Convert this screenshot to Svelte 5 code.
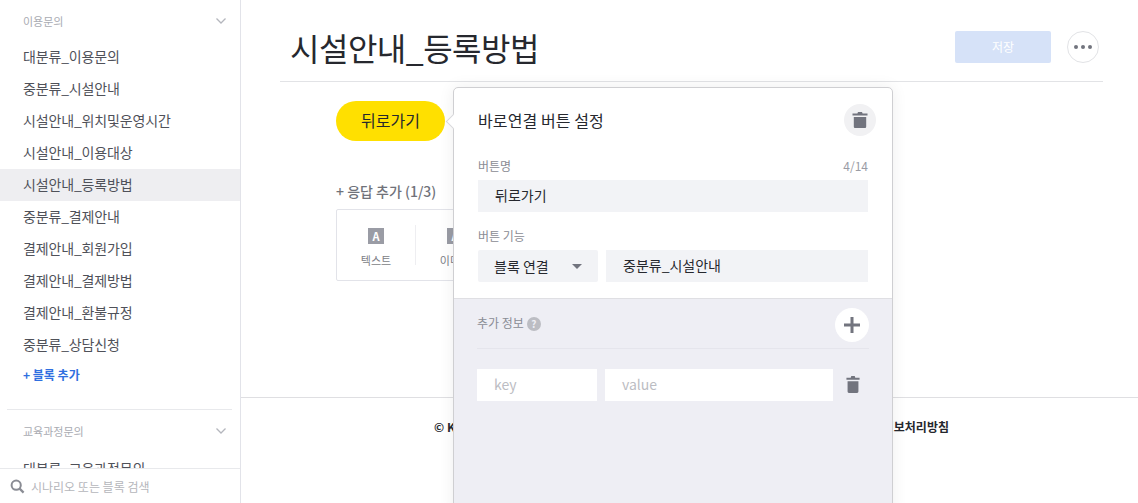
<script>
  const groups = [
    {
      title: "이용문의",
      items: [
        "대분류_이용문의",
        "중분류_시설안내",
        "시설안내_위치및운영시간",
        "시설안내_이용대상",
        "시설안내_등록방법",
        "중분류_결제안내",
        "결제안내_회원가입",
        "결제안내_결제방법",
        "결제안내_환불규정",
        "중분류_상담신청"
      ]
    },
    { title: "교육과정문의", items: ["대분류_교육과정문의"] }
  ];
  const current = "시설안내_등록방법";
  const trash = "M6 0h4l.6 1.6h4.9v1.9H.5V1.6h4.9zM1.8 5h12.4v9.4c0 .9-.6 1.6-1.5 1.6H3.3c-.9 0-1.5-.7-1.5-1.6z";
</script>

<div class="page">
  <aside class="sidebar">
    <div class="tree">
      {#each groups as group, i}
        <section class="group" class:first={i === 0}>
          <div class="group-head">
            <span>{group.title}</span>
            <svg width="10" height="6" viewBox="0 0 10 6"><path d="M.5.5L5 5 9.5.5" fill="none" stroke="#b4b6bd" stroke-width="1.3" /></svg>
          </div>
          {#each group.items as item}
            <div class="row" class:active={item === current}>{item}</div>
          {/each}
          {#if i === 0}
            <div class="add-block">+ 블록 추가</div>
          {/if}
        </section>
      {/each}
    </div>
    <div class="search">
      <svg width="15" height="15" viewBox="0 0 15 15"><circle cx="6.2" cy="6.2" r="4.6" fill="none" stroke="#8a8c94" stroke-width="2" /><path d="M9.6 9.6l4 4" stroke="#8a8c94" stroke-width="2.2" /></svg>
      <span>시나리오 또는 블록 검색</span>
    </div>
  </aside>

  <main class="main">
    <div class="content">
      <header class="head">
        <h1>시설안내_등록방법</h1>
        <div class="save">저장</div>
        <div class="more"><i></i><i></i><i></i></div>
      </header>

      <div class="editor">
        <div class="bubble">뒤로가기</div>
        <div class="add-title">+ 응답 추가 (1/3)</div>
        <div class="types">
          <div class="type">
            <span class="type-icon">A</span>
            <span class="type-name">텍스트</span>
          </div>
          <div class="type">
            <span class="type-icon">A</span>
            <span class="type-name">이미지</span>
          </div>
        </div>

        <div class="panel">
          <span class="arrow"></span>
          <div class="panel-top">
            <div class="panel-head">
              <h2>바로연결 버튼 설정</h2>
              <div class="trash-btn">
                <svg width="16" height="16" viewBox="0 0 16 16"><path d={trash} fill="#72747e" /></svg>
              </div>
            </div>
            <div class="label first-label"><span>버튼명</span><span class="count">4/14</span></div>
            <div class="field">뒤로가기</div>
            <div class="label second-label"><span>버튼 기능</span></div>
            <div class="field-row">
              <div class="field select">블록 연결<span class="caret"></span></div>
              <div class="field grow">중분류_시설안내</div>
            </div>
          </div>
          <div class="panel-extra">
            <div class="extra-head">
              <span class="extra-title">추가 정보</span>
              <span class="help">?</span>
              <div class="plus">
                <svg width="16" height="16" viewBox="0 0 16 16"><path d="M8 0v16M0 8h16" stroke="#72747e" stroke-width="3" /></svg>
              </div>
            </div>
            <div class="extra-row">
              <div class="ph key">key</div>
              <div class="ph value">value</div>
              <svg width="14" height="17" viewBox="0 0 16 16" preserveAspectRatio="none"><path d={trash} fill="#72747e" /></svg>
            </div>
          </div>
        </div>
      </div>
    </div>

    <footer class="foot">
      <div class="foot-inner">
        <span>© Kakao Corp.</span>
        <span>개인정보처리방침</span>
      </div>
    </footer>
  </main>
</div>

<style>
  :global(body) {
    margin: 0;
    background: #fff;
  }

  .page {
    display: flex;
    height: 503px;
    overflow: hidden;
    font-family: "Noto Sans CJK KR", "Noto Sans", sans-serif;
    color: #3b3d45;
  }

  .sidebar {
    width: 240px;
    flex: none;
    display: flex;
    flex-direction: column;
    border-right: 1px solid #e2e3e9;
  }

  .tree {
    flex: 1;
    min-height: 0;
    overflow: hidden;
  }

  .group {
    margin-top: 1px;
  }

  .group.first {
    margin: 0 8px 0 7px;
    padding-bottom: 20px;
    border-bottom: 1px solid #e8e9ec;
  }

  .group-head {
    display: flex;
    align-items: center;
    justify-content: space-between;
    height: 42px;
    box-sizing: border-box;
    padding: 0 14px 2px 23px;
    font-size: 11px;
    color: #a9abb2;
  }

  .group.first .group-head {
    height: 41px;
    padding: 0 6px 0 16px;
  }

  .group.first .row {
    margin: 0 -8px 0 -7px;
  }

  .group.first .add-block {
    margin-left: -7px;
  }

  .row {
    height: 32px;
    line-height: 30px;
    padding-left: 23px;
    font-size: 14px;
    letter-spacing: -0.15px;
    color: #4f5159;
    white-space: nowrap;
  }

  .row.active {
    background: #eeeef1;
  }

  .add-block {
    height: 28px;
    line-height: 28px;
    padding-left: 23px;
    font-size: 12px;
    font-weight: 700;
    color: #2f6fe0;
  }

  .search {
    height: 34px;
    flex: none;
    display: flex;
    align-items: center;
    gap: 6px;
    padding-left: 10px;
    border-top: 1px solid #e8e9ec;
    font-size: 12px;
    color: #b5b6bb;
  }

  .main {
    flex: 1;
    min-width: 0;
    display: flex;
    flex-direction: column;
  }

  .content {
    height: 398px;
    flex: none;
    padding: 0 35px 0 39px;
    box-sizing: border-box;
    border-bottom: 1px solid #dfdfe2;
  }

  .head {
    height: 82px;
    box-sizing: border-box;
    display: flex;
    align-items: center;
    gap: 16px;
    padding: 13px 4px 0 10px;
    border-bottom: 1px solid #e2e3e6;
  }

  h1 {
    flex: 1;
    margin: 0;
    font-size: 32px;
    font-weight: 400;
    letter-spacing: -0.5px;
    color: #26282e;
  }

  .save {
    width: 96px;
    height: 32px;
    line-height: 32px;
    text-align: center;
    font-size: 12px;
    color: #fff;
    background: #d6e2f8;
    border-radius: 2px;
  }

  .more {
    width: 32px;
    height: 32px;
    box-sizing: border-box;
    display: flex;
    align-items: center;
    justify-content: center;
    gap: 3px;
    border: 1px solid #e2e3e6;
    border-radius: 50%;
  }

  .more i {
    width: 4px;
    height: 4px;
    border-radius: 50%;
    background: #72747e;
  }

  .editor {
    position: relative;
    padding: 19px 0 0 56px;
  }

  .bubble {
    width: 109px;
    height: 40px;
    line-height: 39px;
    text-align: center;
    font-size: 16px;
    color: #26282e;
    background: #ffe000;
    border-radius: 20px;
  }

  .add-title {
    margin-top: 40px;
    height: 21px;
    line-height: 20px;
    font-size: 14px;
    font-weight: 500;
    color: #70727a;
  }

  .types {
    margin-top: 7px;
    width: 300px;
    height: 72px;
    box-sizing: border-box;
    display: flex;
    align-items: center;
    border: 1px solid #e2e3e9;
    border-radius: 2px;
  }

  .type {
    width: 79px;
    height: 40px;
    box-sizing: border-box;
    padding-top: 3px;
    display: flex;
    flex-direction: column;
    align-items: center;
    border-right: 1px solid #eeeef1;
  }

  .type-icon {
    width: 16px;
    height: 16px;
    line-height: 16px;
    flex: none;
    text-align: center;
    font-size: 11px;
    font-weight: 700;
    color: #fff;
    background: #9a9ca5;
  }

  .type-name {
    margin-top: 8px;
    font-size: 11px;
    line-height: 16px;
    color: #7c7e86;
  }

  /* floats over the editor */
  .panel {
    position: absolute;
    left: 173px;
    top: 5px;
    width: 440px;
    height: 430px;
    box-sizing: border-box;
    border: 1px solid #cfcfd2;
    border-radius: 5px 5px 0 0;
    background: #fff;
    box-shadow: 0 0 16px rgba(0, 0, 0, 0.07);
  }

  .arrow {
    position: absolute;
    left: -6px;
    top: 28px;
    width: 10px;
    height: 10px;
    background: #fff;
    border-left: 1px solid #d8d8db;
    border-bottom: 1px solid #d8d8db;
    transform: rotate(45deg);
  }

  .panel-top {
    position: relative;
    height: 211px;
    box-sizing: border-box;
    padding: 16px 24px 0 24px;
    border-bottom: 1px solid #dfdfe3;
  }

  .panel-head {
    display: flex;
    align-items: center;
    justify-content: space-between;
    height: 32px;
  }

  h2 {
    margin: 0;
    font-size: 16px;
    font-weight: 400;
    letter-spacing: 0.1px;
    color: #26282e;
  }

  .trash-btn {
    width: 32px;
    height: 32px;
    margin-right: -8px;
    display: flex;
    align-items: center;
    justify-content: center;
    border-radius: 50%;
    background: #f1f1f3;
  }

  .label {
    display: flex;
    justify-content: space-between;
    height: 18px;
    line-height: 18px;
    font-size: 12px;
    color: #8a8c94;
  }

  .first-label {
    margin-top: 21px;
    margin-bottom: 5px;
  }

  .second-label {
    margin-top: 15px;
    margin-bottom: 5px;
  }

  .count {
    font-size: 12px;
    color: #9a9ca5;
  }

  .field {
    height: 32px;
    line-height: 30px;
    padding-left: 17px;
    font-size: 14px;
    color: #26282e;
    background: #f2f3f6;
  }

  .select {
    width: 120px;
    box-sizing: border-box;
    padding: 0 16px 1px;
    border-radius: 2px;
    display: flex;
    align-items: center;
    justify-content: space-between;
  }

  .field-row {
    display: flex;
    gap: 8px;
  }

  .caret {
    width: 0;
    height: 0;
    margin-top: 1px;
    border-left: 5px solid transparent;
    border-right: 5px solid transparent;
    border-top: 5px solid #72747e;
  }

  .grow {
    flex: 1;
  }

  .panel-extra {
    height: 218px;
    box-sizing: border-box;
    padding: 9px 23px 0 23px;
    background: #eeeef4;
  }

  .extra-head {
    display: flex;
    align-items: flex-start;
    gap: 3px;
    height: 41px;
    box-sizing: border-box;
    border-bottom: 1px solid #e5e5ec;
    font-size: 12px;
    color: #8a8c94;
  }

  .extra-title {
    line-height: 30px;
  }

  .help {
    width: 14px;
    height: 14px;
    margin-top: 9px;
    line-height: 14px;
    text-align: center;
    font-size: 10px;
    font-weight: 700;
    color: #eeeef4;
    background: #bcbdc3;
    border-radius: 50%;
  }

  .plus {
    margin-left: auto;
    width: 34px;
    height: 34px;
    display: flex;
    align-items: center;
    justify-content: center;
    border-radius: 50%;
    background: #fff;
  }

  .extra-row {
    display: flex;
    align-items: center;
    gap: 8px;
    margin-top: 20px;
  }

  .ph {
    height: 32px;
    line-height: 30px;
    box-sizing: border-box;
    padding-left: 17px;
    font-size: 14px;
    color: #bcbdc3;
    background: #fff;
  }

  .key {
    width: 120px;
  }

  .value {
    width: 228px;
  }

  .extra-row svg {
    margin-left: 5px;
    margin-bottom: 1px;
  }

  .foot {
    flex: 1;
  }

  .foot-inner {
    width: 515px;
    margin: 20px 0 0 193px;
    display: flex;
    justify-content: space-between;
    font-size: 12px;
    font-weight: 700;
    color: #26282e;
    line-height: 18px;
  }
</style>
